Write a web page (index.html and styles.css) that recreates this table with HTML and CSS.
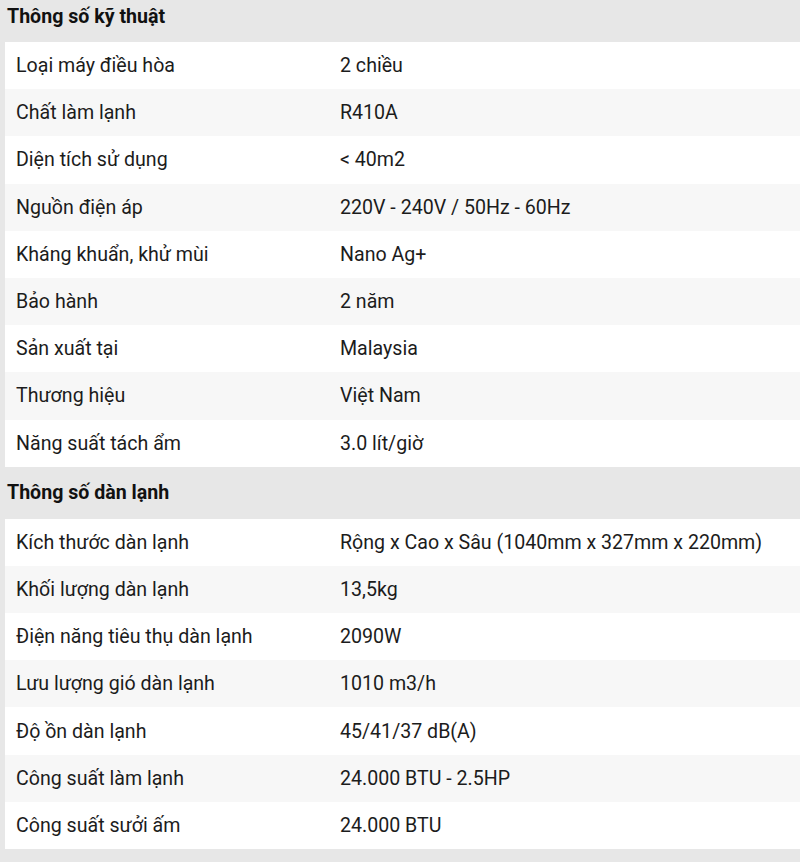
FILE: index.html
```html
<!DOCTYPE html>
<html lang="vi">
<head>
<meta charset="utf-8">
<title>Thông số kỹ thuật</title>
<link rel="stylesheet" href="styles.css">
</head>
<body>
<div class="sheet">
  <section class="group">
    <h2 class="group-title">Thông số kỹ thuật</h2>
    <div class="rows">
      <div class="row"><div class="label">Loại máy điều hòa</div><div class="value">2 chiều</div></div>
      <div class="row"><div class="label">Chất làm lạnh</div><div class="value">R410A</div></div>
      <div class="row"><div class="label">Diện tích sử dụng</div><div class="value">&lt; 40m2</div></div>
      <div class="row"><div class="label">Nguồn điện áp</div><div class="value">220V - 240V / 50Hz - 60Hz</div></div>
      <div class="row"><div class="label">Kháng khuẩn, khử mùi</div><div class="value">Nano Ag+</div></div>
      <div class="row"><div class="label">Bảo hành</div><div class="value">2 năm</div></div>
      <div class="row"><div class="label">Sản xuất tại</div><div class="value">Malaysia</div></div>
      <div class="row"><div class="label">Thương hiệu</div><div class="value">Việt Nam</div></div>
      <div class="row"><div class="label">Năng suất tách ẩm</div><div class="value">3.0 lít/giờ</div></div>
    </div>
  </section>
  <section class="group">
    <h2 class="group-title">Thông số dàn lạnh</h2>
    <div class="rows">
      <div class="row"><div class="label">Kích thước dàn lạnh</div><div class="value">Rộng x Cao x Sâu (1040mm x 327mm x 220mm)</div></div>
      <div class="row"><div class="label">Khối lượng dàn lạnh</div><div class="value">13,5kg</div></div>
      <div class="row"><div class="label">Điện năng tiêu thụ dàn lạnh</div><div class="value">2090W</div></div>
      <div class="row"><div class="label">Lưu lượng gió dàn lạnh</div><div class="value">1010 m3/h</div></div>
      <div class="row"><div class="label">Độ ồn dàn lạnh</div><div class="value">45/41/37 dB(A)</div></div>
      <div class="row"><div class="label">Công suất làm lạnh</div><div class="value">24.000 BTU - 2.5HP</div></div>
      <div class="row"><div class="label">Công suất sưởi ấm</div><div class="value">24.000 BTU</div></div>
    </div>
  </section>
</div>
</body>
</html>
```

FILE: styles.css
```css
html, body {
  margin: 0;
  padding: 0;
  background: #e7e7e7;
}
body {
  font-family: Roboto, "Liberation Sans", Arial, sans-serif;
  font-size: 19.6px;
  color: #1c1c1c;
  overflow: hidden;
}
.sheet {
  margin-top: -10px;
  padding-left: 5px;
}
.group-title {
  margin: 0;
  height: 52px;
  display: flex;
  align-items: center;
  padding: 0 2px;
  font-size: 19.6px;
  font-weight: 700;
  color: #111;
}
.rows {
  display: flex;
  flex-direction: column;
}
.row {
  display: grid;
  grid-template-columns: 324px 1fr;
  height: 47.2px;
  align-items: center;
  padding-left: 11px;
  background: #ffffff;
}
.row:nth-child(even) {
  background: #f7f7f7;
}
.label, .value {
  white-space: nowrap;
}
```
